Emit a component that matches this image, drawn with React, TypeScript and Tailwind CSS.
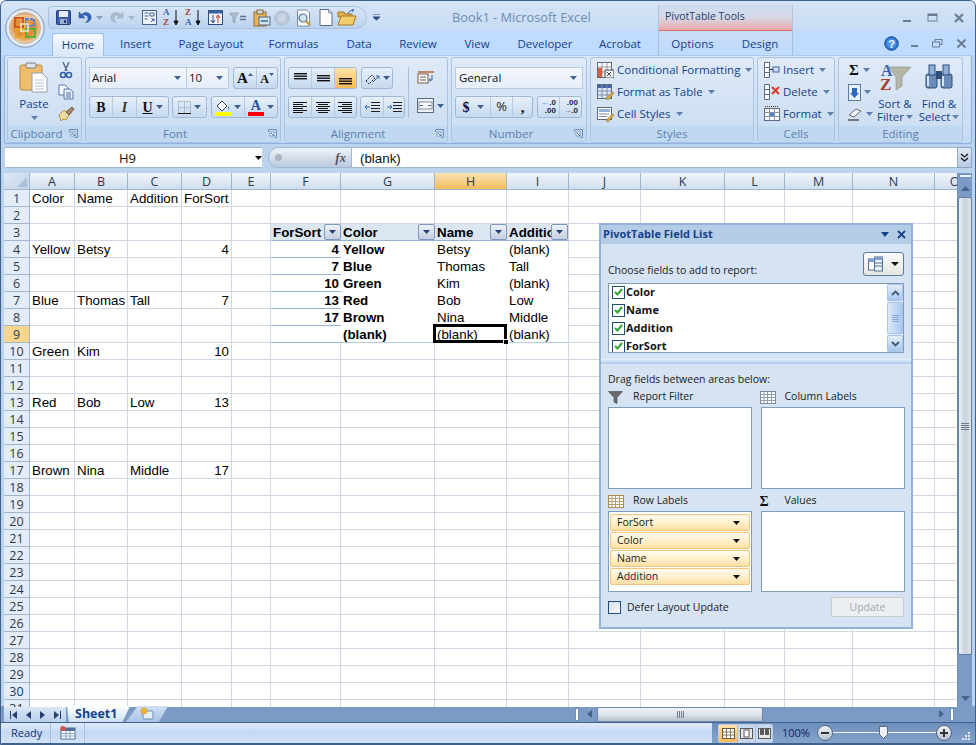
import React from "react";

const COLS = ["A", "B", "C", "D", "E", "F", "G", "H", "I", "J", "K", "L", "M", "N", "O"];
const ROWS = Array.from({ length: 31 }, (_, i) => i + 1);

type CellDef = { t: string; right?: boolean; bold?: boolean };

const CELLS: Record<string, CellDef> = {
  A1: { t: "Color" }, B1: { t: "Name" }, C1: { t: "Addition" }, D1: { t: "ForSort" },
  A4: { t: "Yellow" }, B4: { t: "Betsy" }, D4: { t: "4", right: true },
  A7: { t: "Blue" }, B7: { t: "Thomas" }, C7: { t: "Tall" }, D7: { t: "7", right: true },
  A10: { t: "Green" }, B10: { t: "Kim" }, D10: { t: "10", right: true },
  A13: { t: "Red" }, B13: { t: "Bob" }, C13: { t: "Low" }, D13: { t: "13", right: true },
  A17: { t: "Brown" }, B17: { t: "Nina" }, C17: { t: "Middle" }, D17: { t: "17", right: true },
  F3: { t: "ForSort", bold: true }, G3: { t: "Color", bold: true }, H3: { t: "Name", bold: true }, I3: { t: "Addition", bold: true },
  F4: { t: "4", right: true, bold: true }, G4: { t: "Yellow", bold: true }, H4: { t: "Betsy" }, I4: { t: "(blank)" },
  F5: { t: "7", right: true, bold: true }, G5: { t: "Blue", bold: true }, H5: { t: "Thomas" }, I5: { t: "Tall" },
  F6: { t: "10", right: true, bold: true }, G6: { t: "Green", bold: true }, H6: { t: "Kim" }, I6: { t: "(blank)" },
  F7: { t: "13", right: true, bold: true }, G7: { t: "Red", bold: true }, H7: { t: "Bob" }, I7: { t: "Low" },
  F8: { t: "17", right: true, bold: true }, G8: { t: "Brown", bold: true }, H8: { t: "Nina" }, I8: { t: "Middle" },
  G9: { t: "(blank)", bold: true }, H9: { t: "(blank)" }, I9: { t: "(blank)" },
};

function cellBorder(col: string, row: number) {
  const inPivot = row >= 3 && row <= 9 && ["F", "G", "H", "I"].includes(col);
  if (!inPivot) return "border-r border-b border-[#d0d7e5]";
  if (row === 3) {
    return col === "I"
      ? "bg-[#dce6f1] border-b border-b-[#95b3d7] border-r border-r-[#d0d7e5]"
      : "bg-[#dce6f1] border-b border-b-[#95b3d7]";
  }
  if (col === "F") return "border-b border-b-[#95b3d7]";
  if (row === 9) return col === "I" ? "border-b border-b-[#b8cce4] border-r border-r-[#d0d7e5]" : "border-b border-b-[#b8cce4]";
  return col === "I" ? "border-r border-r-[#d0d7e5]" : "";
}

function Caret({ className = "text-[#3f5f8f]" }: { className?: string }) {
  return (
    <svg width="7" height="4" viewBox="0 0 7 4" className={`shrink-0 ${className}`}>
      <polygon points="0,0 7,0 3.5,4" fill="currentColor" />
    </svg>
  );
}

function FilterBtn() {
  return (
    <div className="absolute right-0 top-0 w-[17px] h-[16px] rounded-[2px] border border-[#7f97bd] bg-gradient-to-b from-[#eef2f8] to-[#c3cede] flex items-center justify-center">
      <Caret className="text-[#27406f]" />
    </div>
  );
}

function Launcher({ className = "" }: { className?: string }) {
  return (
    <svg width="9" height="9" viewBox="0 0 9 9" className={className}>
      <path d="M.5 3V.5H8.5V8.5H6" fill="none" stroke="#6f8fb8" />
      <rect x="2" y="3" width="4" height="4" fill="#fff" stroke="#6f8fb8" strokeWidth=".8" />
      <path d="M3 4l3 3" stroke="#3f5f8f" />
    </svg>
  );
}

function OfficeButton() {
  return (
    <svg width="40" height="40" viewBox="0 0 40 40">
      <defs>
        <radialGradient id="orb" cx="50%" cy="45%" r="55%">
          <stop offset="0%" stopColor="#f2b05a" />
          <stop offset="60%" stopColor="#dd8a35" />
          <stop offset="100%" stopColor="#f0d9b8" />
        </radialGradient>
      </defs>
      <circle cx="20" cy="20" r="19.2" fill="#e4ebf2" stroke="#7d93aa" />
      <circle cx="20" cy="20" r="15.5" fill="url(#orb)" stroke="#c2b39c" />
      <path d="M9 10a15 11 0 0 1 22 0c-5 3-17 3-22 0z" fill="#fff" opacity=".45" />
      <rect x="10" y="10" width="8" height="9" fill="none" stroke="#d8571a" strokeWidth="2" />
      <rect x="21" y="11" width="8" height="7" fill="none" stroke="#4c86d6" strokeWidth="2" strokeDasharray="3 1" />
      <rect x="11" y="21" width="8" height="8" fill="none" stroke="#e6a52a" strokeWidth="2" />
      <rect x="21" y="21" width="9" height="8" fill="none" stroke="#5fae3c" strokeWidth="2" />
      <rect x="16" y="16" width="7" height="7" fill="none" stroke="#f6ead2" strokeWidth="1.4" />
    </svg>
  );
}

function QatSlot({ w = "w-[22px]", children }: { w?: string; children?: React.ReactNode }) {
  return <div className={`${w} h-[22px] shrink-0 flex items-center justify-center`}>{children}</div>;
}

function Qat() {
  return (
    <div className="w-[319px] h-[23px] ml-[48px] mt-[6px] rounded-r-[12px] rounded-l-[4px] border border-[#a9c2df] bg-gradient-to-b from-[#d7e5f6] to-[#bcd3ee] flex items-center pl-[3px] shrink-0">
      <QatSlot>
        <svg width="15" height="15" viewBox="0 0 15 15">
          <rect x=".5" y=".5" width="14" height="14" rx="1" fill="#3c5ea8" stroke="#283c78" />
          <rect x="3" y="1" width="9" height="6" fill="#e8eef8" />
          <rect x="4" y="9" width="7" height="5" fill="#9fb0d0" />
          <rect x="8" y="10" width="2" height="3" fill="#283c78" />
        </svg>
      </QatSlot>
      <QatSlot>
        <svg width="14" height="14" viewBox="0 0 14 14"><path d="M1 1v6h6L4.600 4.600C6 3.300 9.500 3.600 10 6.800c.3 2-.7 3.600-2.400 4.700C12 11 13.500 8 13 5.300 12.300 1.600 7.400.2 3.500 3.400z" fill="#2f66b5" stroke="#244c8c" strokeWidth=".5" /></svg>
      </QatSlot>
      <QatSlot w="w-[6px]"><Caret className="text-[#8aa0bd]" /></QatSlot>
      <div className="w-[4px]" />
      <QatSlot>
        <svg width="14" height="14" viewBox="0 0 14 14" className="-scale-x-100"><path d="M1 1v6h6L4.600 4.600C6 3.300 9.500 3.600 10 6.800c.3 2-.7 3.600-2.400 4.700C12 11 13.500 8 13 5.300 12.300 1.600 7.400.2 3.500 3.400z" fill="#aebccb" stroke="#94a5b8" strokeWidth=".5" /></svg>
      </QatSlot>
      <QatSlot w="w-[6px]"><Caret className="text-[#a3b4c9]" /></QatSlot>
      <div className="w-[4px]" />
      <QatSlot>
        <svg width="15" height="15" viewBox="0 0 15 15">
          <rect x=".5" y=".5" width="14" height="14" fill="#eef3fa" stroke="#46618c" />
          <path d="M2.500 3h4M2.500 6h4M2.500 9h3M8 3h4v3H8z" fill="none" stroke="#46618c" />
          <path d="M9 12l3-3m0 0v2.500m0-2.500H9.500" fill="none" stroke="#2f4f80" />
        </svg>
      </QatSlot>
      <QatSlot>
        <div className="relative w-[16px] h-[18px]">
          <span className="absolute left-0 top-[-2px] font-['Liberation_Serif',serif] font-bold text-[9px] leading-[10px] text-[#3f62a8]">A</span>
          <span className="absolute left-0 top-[8px] font-['Liberation_Serif',serif] font-bold text-[9px] leading-[10px] text-[#a04a3a]">Z</span>
          <svg width="6" height="18" viewBox="0 0 6 18" className="absolute right-0 top-0"><path d="M3 1v14M1 12l2 4 2-4z" stroke="#111" fill="#111" strokeWidth="1" /></svg>
        </div>
      </QatSlot>
      <QatSlot>
        <div className="relative w-[16px] h-[18px]">
          <span className="absolute left-0 top-[-2px] font-['Liberation_Serif',serif] font-bold text-[9px] leading-[10px] text-[#a04a3a]">Z</span>
          <span className="absolute left-0 top-[8px] font-['Liberation_Serif',serif] font-bold text-[9px] leading-[10px] text-[#3f62a8]">A</span>
          <svg width="6" height="18" viewBox="0 0 6 18" className="absolute right-0 top-0"><path d="M3 1v14M1 12l2 4 2-4z" stroke="#111" fill="#111" strokeWidth="1" /></svg>
        </div>
      </QatSlot>
      <QatSlot>
        <svg width="15" height="15" viewBox="0 0 15 15">
          <rect x=".5" y=".5" width="14" height="14" fill="#eef3fa" stroke="#2d4a80" />
          <rect x=".5" y=".5" width="14" height="3" fill="#3b5fa0" />
          <path d="M5 5v8M5 13l-2-3M5 13l2-3" stroke="#2d4a80" fill="none" />
          <path d="M10 13V5M10 5l-2 3M10 5l2 3" stroke="#c83a2a" fill="none" />
        </svg>
      </QatSlot>
      <div className="w-[1px]" />
      <QatSlot>
        <svg width="18" height="12" viewBox="0 0 18 12">
          <path d="M.5 1h9L6 6v5L4 10V6z" fill="#aebccb" stroke="#8b9cb0" strokeWidth=".7" />
          <path d="M11 4.500h6M11 7.500h6" stroke="#5f7898" strokeWidth="1.400" />
        </svg>
      </QatSlot>
      <div className="w-[2px]" />
      <QatSlot w="w-[21px]">
        <svg width="18" height="18" viewBox="0 0 18 18">
          <rect x="1" y="3" width="12" height="14" fill="#e7b45c" stroke="#9a6a22" />
          <rect x="4" y="1" width="6" height="4" fill="#d8d8d8" stroke="#7b6a44" />
          <rect x="6" y="8" width="11" height="8" fill="#d3e4f3" stroke="#4a6a7f" />
          <rect x="8" y="11" width="7" height="2" fill="#5c8a9f" />
        </svg>
      </QatSlot>
      <QatSlot w="w-[19px]">
        <svg width="16" height="16" viewBox="0 0 16 16"><circle cx="8" cy="8" r="7" fill="#bfccdc" stroke="#a9b8ca" /><circle cx="8" cy="8" r="5" fill="#ccd6e3" stroke="#b6c4d4" /></svg>
      </QatSlot>
      <div className="w-[2px]" />
      <QatSlot>
        <svg width="18" height="18" viewBox="0 0 18 18">
          <path d="M2.500 1h9l3 3v13h-12z" fill="#fff" stroke="#7a8aa0" />
          <circle cx="8" cy="9" r="4" fill="#cfe3f5" stroke="#5b6f88" strokeWidth="1.200" />
          <path d="M11 12l4 4" stroke="#c8962a" strokeWidth="2.400" />
        </svg>
      </QatSlot>
      <QatSlot w="w-[21px]">
        <svg width="14" height="17" viewBox="0 0 14 17"><path d="M1 .5h8.500L13 4v12.500H1z" fill="#fff" stroke="#5c6c88" /><path d="M9.500.5V4H13z" fill="#d8e2ee" stroke="#5c6c88" strokeWidth=".6" /></svg>
      </QatSlot>
      <QatSlot>
        <svg width="20" height="17" viewBox="0 0 20 17">
          <path d="M1 3h6l1 2h7v3H1z" fill="#e0b04a" stroke="#a57a25" />
          <path d="M1 16l3-9h15l-3 9z" fill="#f2cc6c" stroke="#a57a25" />
          <path d="M11 5c1-3 3-4 6-4m0 0l-2-1m2 1l-2 2" fill="none" stroke="#3f62a8" />
        </svg>
      </QatSlot>
    </div>
  );
}

function TitleBar() {
  const c = "#6b7d93";
  return (
    <div className="h-[31px] flex shrink-0 bg-gradient-to-b from-[#d5e4f6] via-[#cfe0f5] to-[#c6dbf6] relative">
      <Qat />
      <svg width="7" height="7" viewBox="0 0 7 7" className="ml-[6px] mt-[14px]"><path d="M0 0h7M0 3l3.500 3 3.500-3z" stroke="#2f4f80" fill="#2f4f80" /></svg>
      <div className="absolute left-[452px] top-[7px] text-[12.800px] leading-[20px] text-[#6a8cb4] whitespace-nowrap">Book1 - Microsoft Excel</div>
      <div className="absolute left-[658px] top-[5px] w-[135px] h-[26px] bg-gradient-to-b from-[#cbdcf2] via-[#d6d8e6] to-[#e8a8a8] border-x border-[#b3c3d8] pl-[6px] pt-[3px] text-[10.500px] leading-[17px] text-[#1f3f70] border-b border-b-[#e07070]">PivotTable Tools</div>
      <div className="absolute right-[11px] top-[12px] flex items-center">
        <svg width="10" height="10" viewBox="0 0 10 10"><rect x="1" y="7" width="8" height="2" fill={c} /></svg>
        <svg width="12" height="10" viewBox="0 0 12 10" className="ml-[15px]"><rect x="1" y="1" width="9" height="7" fill="none" stroke={c} /><rect x="1" y="1" width="9" height="2" fill={c} /></svg>
        <svg width="12" height="12" viewBox="0 0 12 12" className="ml-[14px]"><path d="M2 2l8 8M10 2l-8 8" stroke={c} strokeWidth="2.200" /></svg>
      </div>
    </div>
  );
}

const TABS: [string, string][] = [
  ["Insert", "w-[63px]"], ["Page Layout", "w-[88px]"], ["Formulas", "w-[77px]"], ["Data", "w-[54px]"], ["Review", "w-[64px]"],
  ["View", "w-[54px]"], ["Developer", "w-[82px]"], ["Acrobat", "w-[68px]"], ["Options", "w-[77px]"], ["Design", "w-[58px]"],
];

function TabRow() {
  return (
    <div className="h-[24px] flex items-stretch shrink-0 bg-[#bfdbff] relative pl-[52px]">
      <div className="absolute left-[658px] top-0 w-[135px] h-[24px] border-x border-[#a9c0dc] bg-gradient-to-b from-[#c9dcf5] to-[#bfdbff]" />
      <div className="w-[52px] mt-[2px] h-[23px] rounded-t-[3px] border border-b-0 border-[#9ebfe6] bg-gradient-to-b from-[#f6fafe] to-[#d9e7f7] text-center leading-[22px] text-[11.500px] text-[#15428b] relative">Home</div>
      {TABS.map(([t, w]) => (
        <div key={t} className={`${w} text-center leading-[24px] pt-[1px] text-[11.500px] text-[#15428b] relative whitespace-nowrap`}>{t}</div>
      ))}
      <div className="absolute right-[9px] top-[5px] flex items-center">
        <svg width="15" height="15" viewBox="0 0 15 15" className="mr-[11px]"><circle cx="7.500" cy="7.500" r="6.800" fill="#2a6fc9" stroke="#1f4f90" /><circle cx="7.500" cy="7.500" r="5" fill="#4b92e4" /><text x="7.500" y="11.500" textAnchor="middle" fontSize="11" fontWeight="700" fontFamily="Liberation Sans" fill="#fff">?</text></svg>
        <svg width="9" height="9" viewBox="0 0 9 9"><rect x="1" y="6" width="7" height="2" fill="#6b7d93" /></svg>
        <svg width="11" height="9" viewBox="0 0 11 9" className="ml-[13px]"><rect x="3" y=".5" width="7" height="5" fill="none" stroke="#6b7d93" /><rect x=".5" y="3" width="7" height="5" fill="#bfdbff" stroke="#6b7d93" /></svg>
        <svg width="11" height="11" viewBox="0 0 11 11" className="ml-[13px]"><path d="M1.500 1.500l8 8M9.500 1.500l-8 8" stroke="#6b7d93" strokeWidth="2" /></svg>
      </div>
    </div>
  );
}

function Group({ label, w, launcher, children }: { label: string; w: string; launcher?: boolean; children: React.ReactNode }) {
  return (
    <div className={`${w} h-[86px] shrink-0 rounded-[3px] border border-[#a9c3e0] bg-gradient-to-b from-[#dfeaf8] to-[#c9dcf1] flex flex-col overflow-hidden`}>
      <div className="h-[68px] relative">{children}</div>
      <div className={`h-[16px] bg-[#c1d8f1] text-center text-[11.500px] leading-[16px] text-[#5d80ae] relative whitespace-nowrap ${launcher ? "pr-[16px]" : ""}`}>
        {label}
        {launcher && <Launcher className="absolute right-[3px] top-[3px]" />}
      </div>
    </div>
  );
}

function Seg({ w, active, last, children }: { w: string; active?: boolean; last?: boolean; children?: React.ReactNode }) {
  return (
    <div className={`${w} h-full flex items-center justify-center gap-[3px] ${last ? "" : "border-r border-[#b4c9e2]"} ${active ? "bg-gradient-to-b from-[#fde3a7] to-[#fbb954]" : ""}`}>
      {children}
    </div>
  );
}

function SegBox({ w, children }: { w: string; children: React.ReactNode }) {
  return (
    <div className={`${w} h-[22px] shrink-0 rounded-[3px] border border-[#9fb8d8] bg-gradient-to-b from-[#e8f0fa] to-[#c5d9ef] flex overflow-hidden`}>
      {children}
    </div>
  );
}

function Combo({ w, text, className = "" }: { w: string; text: string; className?: string }) {
  return (
    <div className={`${w} h-[22px] shrink-0 border border-[#b5cbe5] bg-gradient-to-b from-[#f4f8fd] to-[#e6eef9] flex items-center justify-between pl-[2px] pr-[5px] text-[11.500px] text-[#111] ${className}`}>
      <span>{text}</span>
      <Caret />
    </div>
  );
}

function Lines({ rows, h = 1 }: { rows: [number, number, number][]; h?: number }) {
  return (
    <svg width="15" height="13" viewBox="0 0 15 13">
      {rows.map(([x, y, w], i) => (
        <rect key={i} x={x} y={y} width={w} height={h} fill="#111" />
      ))}
    </svg>
  );
}

const ALIGN_L: [number, number, number][] = [[0, 1, 14], [0, 3, 10], [0, 5, 14], [0, 7, 10], [0, 9, 14], [0, 11, 10]];
const ALIGN_C: [number, number, number][] = [[0, 1, 14], [2, 3, 10], [0, 5, 14], [2, 7, 10], [0, 9, 14], [2, 11, 10]];
const ALIGN_R: [number, number, number][] = [[0, 1, 14], [4, 3, 10], [0, 5, 14], [4, 7, 10], [0, 9, 14], [4, 11, 10]];

function Clipboard() {
  return (
    <Group label="Clipboard" w="w-[75px]" launcher>
      <div className="absolute left-0 top-0 w-[48px] flex flex-col items-center pt-[4px] pl-[4px]">
        <svg width="30" height="32" viewBox="0 0 30 32">
          <rect x="1" y="3" width="22" height="25" rx="2" fill="#eebd6e" stroke="#b98a3f" />
          <rect x="7" y="1" width="10" height="5" rx="1" fill="#dfe3e8" stroke="#7f7f7f" />
          <path d="M13 11h10l5 5v14H13z" fill="#fff" stroke="#8e9bb0" />
          <path d="M16 18h9M16 21h9M16 24h9M16 27h9" stroke="#b4bfd0" />
        </svg>
        <div className="text-[11.500px] leading-[14px] text-[#15428b] mt-[3px]">Paste</div>
        <Caret className="text-[#5c7fae] mt-[5px]" />
      </div>
      <div className="absolute left-[48px] top-[4px] w-[20px] flex flex-col items-center">
        <svg width="14" height="17" viewBox="0 0 14 17"><path d="M4 0l4 9M10 0L6 9" stroke="#5a6c8c" strokeWidth="1.500" /><circle cx="4" cy="13" r="2.500" fill="none" stroke="#2f5fa8" strokeWidth="1.600" /><circle cx="10" cy="13" r="2.500" fill="none" stroke="#2f5fa8" strokeWidth="1.600" /></svg>
        <svg width="16" height="16" viewBox="0 0 16 16" className="mt-[5px]"><path d="M1 1h6l3 3v7H1z" fill="#fff" stroke="#5677a8" /><path d="M6 5h6l3 3v7H6z" fill="#e6effa" stroke="#5677a8" /><path d="M8 9h5M8 11h5M8 13h5" stroke="#5677a8" /></svg>
        <svg width="17" height="16" viewBox="0 0 17 16" className="mt-[6px]"><path d="M1 9l5-5 5 5-3 5-3-1-2 2z" fill="#eedb9f" stroke="#b8923f" /><path d="M8 6l6-5 2 2-5 6z" fill="#a9876a" stroke="#6e5a44" /></svg>
      </div>
    </Group>
  );
}

function FontGroup() {
  return (
    <Group label="Font" w="w-[196px]" launcher>
      <div className="flex pl-[3px] pt-[9px]">
        <Combo w="w-[98px]" text="Arial" />
        <Combo w="w-[42px]" text="10" className="border-l-0" />
        <div className="w-[4px]" />
        <SegBox w="w-[45px]">
          <Seg w="w-[23px]"><span className="font-['Liberation_Serif',serif] font-bold text-[15px] text-[#111] leading-[14px]">A</span><svg width="5" height="3" viewBox="0 0 5 3" className="mb-[8px] ml-[-3px]"><polygon points="0,3 5,3 2.500,0" fill="#3f5f8f" /></svg></Seg>
          <Seg w="w-[20px]" last><span className="font-['Liberation_Serif',serif] font-bold text-[12px] text-[#111] leading-[14px] mt-[2px]">A</span><svg width="5" height="3" viewBox="0 0 5 3" className="mb-[8px] ml-[-3px]"><polygon points="0,0 5,0 2.500,3" fill="#3f5f8f" /></svg></Seg>
        </SegBox>
      </div>
      <div className="flex pl-[3px] pt-[7px]">
        <SegBox w="w-[80px]">
          <Seg w="w-[23px]"><span className="font-['Liberation_Serif',serif] font-bold text-[14px] text-[#111]">B</span></Seg>
          <Seg w="w-[24px]"><span className="font-['Liberation_Serif',serif] italic font-bold text-[14px] text-[#333]">I</span></Seg>
          <Seg w="w-[31px]" last><span className="font-['Liberation_Serif',serif] font-bold text-[14px] text-[#111] underline">U</span><Caret /></Seg>
        </SegBox>
        <div className="w-[3px]" />
        <SegBox w="w-[35px]">
          <Seg w="w-full" last>
            <svg width="13" height="13" viewBox="0 0 13 13"><path d="M.5.5h12M.5 6.500h12M.5.5v12M6.500.5v12M12.500.5v12" stroke="#8a96a8" strokeDasharray="1 1" /><path d="M0 12.500h13" stroke="#111" /></svg>
            <Caret />
          </Seg>
        </SegBox>
        <div className="w-[4px]" />
        <SegBox w="w-[67px]">
          <Seg w="w-[33px]">
            <svg width="16" height="17" viewBox="0 0 16 17"><path d="M2 7l5-5 5 5-5 5z" fill="#fff" stroke="#444" /><path d="M13 7c1 1 2 3 1 4-1 0-1-3-1-4z" fill="#3f7fc0" /><rect y="13" width="16" height="4" fill="#ffff00" /></svg>
            <Caret />
          </Seg>
          <Seg w="w-[33px]" last>
            <div className="flex flex-col items-center">
              <span className="font-['Liberation_Serif',serif] font-bold text-[14px] leading-[13px] text-[#27509a]">A</span>
              <div className="w-[16px] h-[4px] bg-[#ff0000]" />
            </div>
            <Caret />
          </Seg>
        </SegBox>
      </div>
    </Group>
  );
}

function Alignment() {
  return (
    <Group label="Alignment" w="w-[164px]" launcher>
      <div className="flex pl-[3px] pt-[9px]">
        <div className="w-[117px] shrink-0">
          <div className="flex">
            <SegBox w="w-[69px]">
              <Seg w="w-[23px]"><Lines h={1.4} rows={[[1, 1, 13], [1, 3.500, 13], [1, 6, 13]]} /></Seg>
              <Seg w="w-[23px]"><Lines h={1.4} rows={[[1, 3, 13], [1, 5.500, 13], [1, 8, 13]]} /></Seg>
              <Seg w="w-[21px]" active last><Lines h={1.4} rows={[[1, 6, 13], [1, 8.500, 13], [1, 11, 13]]} /></Seg>
            </SegBox>
            <div className="w-[4px]" />
            <SegBox w="w-[32px]">
              <Seg w="w-full" last>
                <svg width="15" height="13" viewBox="0 0 15 13"><path d="M1 9l6-6 3 3-6 6z" fill="none" stroke="#222" strokeDasharray="2 1" /><path d="M8 10l6-6m0 0v3m0-3h-3" stroke="#3f5f8f" fill="none" /></svg>
                <Caret />
              </Seg>
            </SegBox>
          </div>
          <div className="flex mt-[7px]">
            <SegBox w="w-[69px]">
              <Seg w="w-[23px]"><Lines rows={ALIGN_L} /></Seg>
              <Seg w="w-[23px]"><Lines rows={ALIGN_C} /></Seg>
              <Seg w="w-[21px]" last><Lines rows={ALIGN_R} /></Seg>
            </SegBox>
            <div className="w-[3px]" />
            <SegBox w="w-[45px]">
              <Seg w="w-[23px]">
                <svg width="15" height="13" viewBox="0 0 15 13"><path d="M6 1.500h9M6 4.500h9M6 7.500h9M6 10.500h9" stroke="#222" /><path d="M5 6H0m0 0l2-2m-2 2l2 2" stroke="#2f66c0" fill="none" /></svg>
              </Seg>
              <Seg w="w-[20px]" last>
                <svg width="15" height="13" viewBox="0 0 15 13"><path d="M6 1.500h9M6 4.500h9M6 7.500h9M6 10.500h9" stroke="#222" /><path d="M0 6h5m0 0L3 4m2 2L3 8" stroke="#2f66c0" fill="none" /></svg>
              </Seg>
            </SegBox>
          </div>
        </div>
        <div className="w-px h-[51px] bg-[#a9c0dc] ml-[3px] mr-[8px] shrink-0" />
        <div className="flex flex-col pt-[3px] gap-[12px]">
          <svg width="18" height="16" viewBox="0 0 18 16"><rect x="1" y="4" width="10" height="9" fill="#fff" stroke="#7a5a3a" /><path d="M1 2h16" stroke="#b06a3a" strokeWidth="1.500" /><path d="M3 7h6M3 10h6" stroke="#5a5a5a" /><path d="M15 5v5h-3m0 0l1.500-1.500M12 10l1.500 1.500" fill="none" stroke="#3f5f8f" /></svg>
          <div className="flex items-center gap-[3px]">
            <svg width="17" height="15" viewBox="0 0 17 15"><rect x=".5" y=".5" width="16" height="14" fill="#eef3fa" stroke="#5a6a80" /><rect x="2" y="4" width="13" height="7" fill="#fff" stroke="#7a8aa0" /><path d="M3 7.500h3M14 7.500h-3" stroke="#3f5f8f" /></svg>
            <Caret />
          </div>
        </div>
      </div>
    </Group>
  );
}

function NumberGroup() {
  return (
    <Group label="Number" w="w-[136px]" launcher>
      <div className="pl-[3px] pt-[9px]"><Combo w="w-[128px]" text="General" className="pl-[3px]" /></div>
      <div className="flex pl-[3px] pt-[7px]">
        <SegBox w="w-[78px]">
          <Seg w="w-[35px]"><span className="font-['Liberation_Serif',serif] font-bold text-[14px] text-[#111] mr-[4px]">$</span><Caret /></Seg>
          <Seg w="w-[22px]"><span className="text-[13px] text-[#222]">%</span></Seg>
          <Seg w="w-[19px]" last><span className="font-['Liberation_Serif',serif] font-bold text-[15px] text-[#111] leading-[10px]">,</span></Seg>
        </SegBox>
        <div className="w-[4px]" />
        <SegBox w="w-[45px]">
          <Seg w="w-[22px]"><div className="font-['Liberation_Sans',sans-serif] font-bold text-[8px] leading-[8px] text-[#222] text-right"><span className="text-[#2f66c0]">←</span>.0<br />.00</div></Seg>
          <Seg w="w-[21px]" last><div className="font-['Liberation_Sans',sans-serif] font-bold text-[8px] leading-[8px] text-[#222] text-right"><span>.00</span><br /><span className="text-[#2f66c0]">→</span>.0</div></Seg>
        </SegBox>
      </div>
    </Group>
  );
}

function IconRow({ icon, text }: { icon: React.ReactNode; text: string }) {
  return (
    <div className="h-[22px] flex items-center pl-[6px] gap-[3px] text-[11.500px] text-[#15428b] whitespace-nowrap">
      {icon}
      <span>{text}</span>
      <Caret className="text-[#5c7fae] ml-[2px]" />
    </div>
  );
}

function Styles() {
  return (
    <Group label="Styles" w="w-[164px]">
      <div className="pt-[1px]">
        <IconRow
          text="Conditional Formatting"
          icon={<svg width="17" height="16" viewBox="0 0 17 16"><rect x=".5" y=".5" width="14" height="15" fill="#fff" stroke="#667" /><path d="M.5 5h14M.5 10h14M5 .5v15M10 .5v15" stroke="#8a96a8" /><rect x="1" y="6" width="4" height="9" fill="#e05a3a" /><rect x="8" y="8" width="9" height="8" fill="#eef3fa" stroke="#444" /><path d="M10 10l4 4M14 10l-4 4" stroke="#222" strokeWidth=".8" /></svg>}
        />
        <IconRow
          text="Format as Table"
          icon={<svg width="17" height="16" viewBox="0 0 17 16"><rect x=".5" y=".5" width="14" height="14" fill="#dbe7f6" stroke="#5a6a80" /><rect x="1" y="1" width="13" height="3" fill="#3f62a8" /><path d="M.5 7h14M.5 11h14M5 .5v14M10 .5v14" stroke="#7f8ea4" /><path d="M9 15l6-7 2 1-6 7z" fill="#e0b040" stroke="#8a6a20" strokeWidth=".6" /></svg>}
        />
        <IconRow
          text="Cell Styles"
          icon={<svg width="17" height="16" viewBox="0 0 17 16"><rect x=".5" y="1.500" width="14" height="12" fill="#fff" stroke="#5a6a80" /><rect x="2" y="3" width="11" height="3" fill="#8fb4e2" /><path d="M2 8h10M2 10.500h8" stroke="#7f8ea4" /><path d="M9 15l6-7 2 1-6 7z" fill="#e0b040" stroke="#8a6a20" strokeWidth=".6" /></svg>}
        />
      </div>
    </Group>
  );
}

function Cells() {
  return (
    <Group label="Cells" w="w-[78px]">
      <div className="pt-[1px]">
        <IconRow
          text="Insert"
          icon={<svg width="16" height="16" viewBox="0 0 16 16"><path d="M.5.5h5v5h-5zM.5 10.500h5v5h-5zM.5 5.500h5v5h-5z" fill="#fff" stroke="#5a6a80" /><rect x="9" y="5" width="6" height="5" fill="#cfe0f5" stroke="#3f62a8" /><path d="M6 7.500h3" stroke="#222" /></svg>}
        />
        <IconRow
          text="Delete"
          icon={<svg width="16" height="16" viewBox="0 0 16 16"><path d="M.5.5h5v5h-5zM.5 10.500h5v5h-5zM.5 5.500h5v5h-5z" fill="#fff" stroke="#5a6a80" /><path d="M8 3l7 7M15 3l-7 7" stroke="#d83a2a" strokeWidth="2" /></svg>}
        />
        <IconRow
          text="Format"
          icon={<svg width="16" height="16" viewBox="0 0 16 16"><rect x=".5" y="2.500" width="15" height="12" fill="#fff" stroke="#5a6a80" /><path d="M.5 6.500h15M.5 10.500h15M5.500 2.500v12M10.500 2.500v12" stroke="#8a96a8" /><rect x="6" y="7" width="4" height="3" fill="#4f7fd0" /><path d="M1 .5h14" stroke="#333" strokeDasharray="1 1" /></svg>}
        />
      </div>
    </Group>
  );
}

function Editing() {
  return (
    <Group label="Editing" w="w-[125px]">
      <div className="absolute left-[9px] top-[1px] w-[28px]">
        <div className="h-[22px] flex items-center gap-[4px]"><span className="font-['Liberation_Serif',serif] font-bold text-[15px] leading-[15px] text-[#111] ml-[1px]">Σ</span><Caret className="text-[#5c7fae]" /></div>
        <div className="h-[22px] flex items-center gap-[3px]"><svg width="13" height="17" viewBox="0 0 13 17"><rect x=".5" y=".5" width="12" height="16" fill="#e8f0fa" stroke="#5a7aa8" /><path d="M4 4h5v5h2l-4.500 5L2 9h2z" fill="#2f66c0" /></svg><Caret className="text-[#5c7fae]" /></div>
        <div className="h-[22px] flex items-center gap-[3px]"><svg width="15" height="14" viewBox="0 0 15 14"><path d="M1 8l7-6 5 2-7 6z" fill="#f2f4f8" stroke="#6a6a7a" /><path d="M0 13h11" stroke="#111" /></svg><Caret className="text-[#5c7fae]" /></div>
      </div>
      <div className="absolute left-[36px] top-[4px] w-[40px] flex flex-col items-center text-[11.500px] leading-[13px] text-[#15428b]">
        <svg width="32" height="29" viewBox="0 0 32 29">
          <path d="M10 5h22L23 15v9l-6 4V15z" fill="#b5b5a8" stroke="#8a8a80" strokeWidth=".6" />
          <text x="2" y="14" fontFamily="Liberation Serif" fontWeight="700" fontSize="16" fill="#3f62a8">A</text>
          <text x="1" y="28" fontFamily="Liberation Serif" fontWeight="700" fontSize="17" fill="#a04030">Z</text>
        </svg>
        <div className="mt-[6px] whitespace-nowrap">Sort &amp;</div>
        <div className="flex items-center gap-[2px] whitespace-nowrap">Filter<Caret className="text-[#5c7fae]" /></div>
      </div>
      <div className="absolute left-[78px] top-[4px] w-[44px] flex flex-col items-center text-[11.500px] leading-[13px] text-[#15428b]">
        <svg width="28" height="29" viewBox="0 0 28 29">
          <rect x="1" y="12" width="11" height="14" rx="2" fill="#6a8cb8" stroke="#2f4f78" />
          <rect x="16" y="12" width="11" height="14" rx="2" fill="#6a8cb8" stroke="#2f4f78" />
          <rect x="4" y="3" width="6" height="10" fill="#8fb0d8" stroke="#2f4f78" />
          <rect x="18" y="3" width="6" height="10" fill="#8fb0d8" stroke="#2f4f78" />
          <rect x="11" y="9" width="6" height="8" fill="#2f4f78" />
          <path d="M3 14v10M18 14v10" stroke="#d4e4f8" strokeWidth="2" />
        </svg>
        <div className="mt-[6px] whitespace-nowrap">Find &amp;</div>
        <div className="flex items-center gap-[2px] whitespace-nowrap">Select<Caret className="text-[#5c7fae]" /></div>
      </div>
    </Group>
  );
}

function Ribbon() {
  return (
    <div className="h-[92px] shrink-0 bg-[#bcd3ee] px-[4px] pb-[3px]">
      <div className="h-[89px] rounded-[3px] border border-[#8db2e3] border-t-[#a9c8ec] bg-gradient-to-b from-[#dbe8f8] to-[#c5daf2] flex gap-[3px] pl-[2px] pt-[1px]">
        <Clipboard />
        <FontGroup />
        <Alignment />
        <NumberGroup />
        <Styles />
        <Cells />
        <Editing />
      </div>
    </div>
  );
}

function FormulaBar() {
  return (
    <div className="h-[26px] shrink-0 bg-[#bcd3ee] flex pl-[5px] pr-[4px] pb-[5px]">
      <div className="w-[257px] bg-white border-y border-[#9db8d6] flex items-center relative text-[13px] text-[#111]">
        <span className="absolute left-[114px] top-[1px]">H9</span>
        <Caret className="absolute right-[0px] text-[#111]" />
      </div>
      <div className="w-[6px]" />
      <div className="w-[84px] rounded-l-full border border-[#9db8d6] bg-gradient-to-b from-[#f0f4f9] via-[#d5dfeb] to-[#bccadd] flex items-center justify-between pl-[6px] pr-[5px]">
        <div className="w-[7px] h-[7px] rounded-full bg-[#aab6c5]" />
        <span className="font-['Liberation_Serif',serif] italic font-bold text-[13px] text-[#555]">fx</span>
      </div>
      <div className="flex-1 bg-white border-y border-[#9db8d6] pl-[8px] pt-[1px] text-[13.330px] leading-[19px] font-['Liberation_Sans',sans-serif] text-[#111]">(blank)</div>
      <div className="w-[15px] border border-[#8aa6c8] bg-gradient-to-b from-[#e0e9f5] to-[#b8cbe3] flex items-center justify-center">
        <svg width="9" height="9" viewBox="0 0 9 9"><path d="M1 1l3.500 3L8 1M1 5l3.500 3L8 5" fill="none" stroke="#111" strokeWidth="1.300" /></svg>
      </div>
    </div>
  );
}

function Sheet() {
  return (
    <div className="w-[953px] h-[534px] overflow-hidden relative bg-white">
      <div className="grid grid-cols-[26px_45px_53px_54px_50px_39px_70px_94px_72px_62px_72px_84px_60px_68px_82px_40px] auto-rows-[17px] font-['Liberation_Sans',sans-serif] text-[13.330px] leading-[16px] text-[#000]">
        <div className="border-r border-b border-[#9eb6ce] bg-gradient-to-br from-[#dfe8f4] to-[#c3d3e8] flex items-end justify-end pr-[2px] pb-[2px]">
          <svg width="10" height="10" viewBox="0 0 10 10"><polygon points="10,0 10,10 0,10" fill="#a9bfd9" /></svg>
        </div>
        {COLS.map((c) => (
          <div key={c} className={`border-r border-b border-[#9eb6ce] bg-gradient-to-b text-center pt-[1px] overflow-hidden font-['Open_Sans',sans-serif] text-[12.500px] leading-[15px] text-[#2a3a50] ${c === "H" ? "from-[#fbe3b0] to-[#f3bd5c]" : "from-[#eff4fa] to-[#d2deee]"}`}>
            {c}
          </div>
        ))}
        {ROWS.map((r) => (
          <React.Fragment key={r}>
            <div className={`border-r border-b border-[#9eb6ce] text-center pt-[1px] overflow-hidden font-['Open_Sans',sans-serif] text-[12.500px] leading-[15px] text-[#2a3a50] ${r === 9 ? "bg-[#fbd48d]" : "bg-[#e4ecf7]"}`}>
              {r}
            </div>
            {COLS.map((c) => {
              const k = `${c}${r}`;
              const cell = CELLS[k];
              return (
                <div key={k} className={`relative overflow-hidden whitespace-nowrap px-[2px] pt-[1px] ${cellBorder(c, r)} ${cell?.right ? "text-right" : ""} ${cell?.bold ? "font-bold" : ""}`}>
                  {cell?.t}
                  {r === 3 && ["F", "G", "H", "I"].includes(c) && <FilterBtn />}
                </div>
              );
            })}
          </React.Fragment>
        ))}
      </div>
      <div className="absolute left-[429px] top-[151px] w-[74px] h-[19px] border-[3px] border-black">
        <div className="absolute right-[-5px] bottom-[-5px] w-[6px] h-[6px] bg-black border border-white" />
      </div>
      <PivotPanel />
    </div>
  );
}

function FieldRow({ name }: { name: string }) {
  return (
    <div className="h-[18px] flex items-center pl-[3px] gap-[1px] font-bold text-[11px] text-[#111] shrink-0">
      <div className="w-[13px] h-[13px] border border-[#1f4f6f] bg-white flex items-center justify-center shrink-0">
        <svg width="9" height="8" viewBox="0 0 9 8"><path d="M1 4l2.500 2.500L8 1" fill="none" stroke="#2fa52f" strokeWidth="2" /></svg>
      </div>
      {name}
    </div>
  );
}

function AreaHead({ icon, text }: { icon: React.ReactNode; text: string }) {
  return (
    <div className="w-[153px] flex items-center h-[18px]">
      <div className="w-[25px] flex items-center">{icon}</div>
      {text}
    </div>
  );
}

function PillField({ name }: { name: string }) {
  return (
    <div className="h-[17px] mb-[1px] rounded-[2px] border border-[#f2c47c] bg-gradient-to-b from-[#fffbef] via-[#fff0cc] to-[#fddfa4] flex items-center justify-between pl-[6px] pr-[9px] text-[10.500px] text-[#222]">
      {name}
      <Caret className="text-[#111]" />
    </div>
  );
}

const TableIcon = ({ tint }: { tint: string }) => (
  <svg width="16" height="13" viewBox="0 0 16 13">
    <rect x=".5" y=".5" width="15" height="12" fill="#fff" stroke={tint} />
    <path d="M.5 3.500h15M.5 6.500h15M.5 9.500h15M4 .5v12M7.500 .5v12M11.500 .5v12" stroke={tint} strokeWidth=".8" />
  </svg>
);

function PivotPanel() {
  return (
    <div className="absolute left-[595px] top-[50px] w-[314px] h-[406px] border-2 border-[#8fb2dc] bg-[#d5e3f2] text-[10.500px] text-[#222] font-['Open_Sans',sans-serif] flex flex-col">
      <div className="h-[19px] bg-[#b5cce6] flex items-center justify-between pl-[2px] pr-[5px] font-bold text-[11px] text-[#15428b] shrink-0">
        PivotTable Field List
        <div className="flex items-center gap-[8px]">
          <svg width="8" height="5" viewBox="0 0 8 5"><polygon points="0,0 8,0 4,5" fill="#15428b" /></svg>
          <svg width="9" height="9" viewBox="0 0 9 9"><path d="M1 1l7 7M8 1L1 8" stroke="#15428b" strokeWidth="1.800" /></svg>
        </div>
      </div>
      <div className="flex justify-end pr-[7px] pt-[8px] h-[31px] shrink-0">
        <div className="w-[41px] h-[24px] rounded-[3px] border border-[#5a7ba0] bg-gradient-to-b from-[#fbfcfe] to-[#e5e5e0] flex items-center justify-center gap-[8px]">
          <svg width="15" height="16" viewBox="0 0 15 16"><rect x=".5" y="3" width="7" height="11" fill="#fff" stroke="#4f6f98" /><rect x=".5" y="3" width="7" height="3" fill="#7f9fd0" /><rect x="6.500" y="1" width="8" height="14" fill="#eef3fa" stroke="#4f6f98" /><rect x="6.500" y="1" width="8" height="3" fill="#7f9fd0" /><path d="M6.500 7h8M6.500 10h8" stroke="#4f6f98" /></svg>
          <svg width="8" height="4" viewBox="0 0 8 4"><polygon points="0,0 8,0 4,4" fill="#111" /></svg>
        </div>
      </div>
      <div className="pl-[7px] h-[15px] leading-[15px] -mt-[12px] shrink-0 text-[#222]">Choose fields to add to report:</div>
      <div className="ml-[7px] mr-[7px] mt-[5px] h-[70px] border border-[#7f9db9] bg-white flex overflow-hidden shrink-0">
        <div className="flex-1 flex flex-col -mt-[1px] overflow-hidden">
          {["Color", "Name", "Addition", "ForSort"].map((f) => <FieldRow key={f} name={f} />)}
        </div>
        <div className="w-[16px] flex flex-col bg-[#e3ecf8]">
          <div className="h-[17px] rounded-[2px] border border-[#a9c4ea] bg-gradient-to-b from-[#e4edf9] to-[#a9c6f0] flex items-center justify-center"><svg width="9" height="6" viewBox="0 0 9 6"><path d="M1 5l3.500-3.500L8 5" fill="none" stroke="#3f5878" strokeWidth="1.800" /></svg></div>
          <div className="h-[32px] mt-[1px] rounded-[2px] border border-[#a9c4ea] bg-gradient-to-r from-[#dce8f9] to-[#aac8f2] flex flex-col items-center justify-center gap-[1px]">
            <div className="w-[7px] h-px bg-[#8aa8d2]" /><div className="w-[7px] h-px bg-[#8aa8d2]" /><div className="w-[7px] h-px bg-[#8aa8d2]" /><div className="w-[7px] h-px bg-[#8aa8d2]" />
          </div>
          <div className="h-[17px] mt-[1px] rounded-[2px] border border-[#a9c4ea] bg-gradient-to-b from-[#e4edf9] to-[#a9c6f0] flex items-center justify-center"><svg width="9" height="6" viewBox="0 0 9 6"><path d="M1 1l3.500 3.500L8 1" fill="none" stroke="#3f5878" strokeWidth="1.800" /></svg></div>
        </div>
      </div>
      <div className="h-[5px] mt-[6px] bg-gradient-to-b from-[#e9f1fa] to-[#a9c8ec] shrink-0" />
      <div className="pl-[7px] mt-[8px] h-[15px] leading-[15px] shrink-0">Drag fields between areas below:</div>
      <div className="flex pl-[7px] h-[18px] mt-[1px] shrink-0">
        <AreaHead text="Report Filter" icon={<svg width="15" height="13" viewBox="0 0 15 13"><path d="M.5.500h14L9 6.500v6l-3-1.500V6.500z" fill="#6a6a6a" stroke="#444" strokeWidth=".6" /></svg>} />
        <AreaHead text="Column Labels" icon={<TableIcon tint="#7a8aa0" />} />
      </div>
      <div className="flex pl-[7px] gap-[9px] mt-[1px] shrink-0">
        <div className="w-[144px] h-[82px] border border-[#7f9db9] bg-white" />
        <div className="w-[144px] h-[82px] border border-[#7f9db9] bg-white" />
      </div>
      <div className="flex pl-[7px] h-[18px] mt-[3px] shrink-0">
        <AreaHead text="Row Labels" icon={<TableIcon tint="#b08a50" />} />
        <AreaHead text="Values" icon={<span className="font-['Liberation_Serif',serif] font-bold text-[14px] text-[#111] leading-[13px]">Σ</span>} />
      </div>
      <div className="flex pl-[7px] gap-[9px] mt-[1px] shrink-0">
        <div className="w-[144px] h-[81px] border border-[#7f9db9] bg-white px-[1px] pt-[2px]">
          {["ForSort", "Color", "Name", "Addition"].map((f) => <PillField key={f} name={f} />)}
        </div>
        <div className="w-[144px] h-[81px] border border-[#7f9db9] bg-white" />
      </div>
      <div className="flex items-center pl-[7px] pr-[7px] mt-[5px] h-[20px] shrink-0">
        <div className="w-[13px] h-[13px] border border-[#1f4f7f] bg-gradient-to-br from-[#d5dde8] to-[#fafbfd]" />
        <span className="ml-[6px] pt-[2px]">Defer Layout Update</span>
        <div className="ml-auto w-[73px] h-[20px] rounded-[2px] border border-[#c9cdc6] bg-[#ecf0f2] text-center leading-[18px] text-[#a3a8ad]">Update</div>
      </div>
    </div>
  );
}

function VScroll() {
  return (
    <div className="w-[15px] h-[534px] bg-[#7b9bc6] border-l border-[#6b8ebf] flex flex-col items-center shrink-0">
      <div className="w-[13px] h-[4px] mt-[1px] bg-[#eef3fa] border border-[#6f8fb8]" />
      <svg width="9" height="5" viewBox="0 0 9 5" className="mt-[8px]"><polygon points="0,5 9,5 4.500,0" fill="#4a6488" /></svg>
      <div className="w-full h-[458px] mt-[6px] rounded-[2px] border border-[#5f7da6] bg-gradient-to-r from-[#eef2f7] via-[#c9d2dd] to-[#dfe4eb] flex flex-col items-center justify-center gap-[1px]">
        <div className="w-[8px] h-px bg-[#6d7a8a]" /><div className="w-[8px] h-px bg-[#6d7a8a]" /><div className="w-[8px] h-px bg-[#6d7a8a]" /><div className="w-[8px] h-px bg-[#6d7a8a]" />
      </div>
      <svg width="9" height="5" viewBox="0 0 9 5" className="mt-[41px]"><polygon points="0,0 9,0 4.500,5" fill="#4a6488" /></svg>
    </div>
  );
}

function TabBar() {
  return (
    <div className="h-[17px] shrink-0 flex bg-[#7b9bc6] border-b border-[#3f618c] pl-[4px] pr-[4px]">
      <div className="w-[62px] h-full bg-gradient-to-b from-[#dbe7f6] to-[#b8cfeb] flex items-center justify-around px-[1px] border-t border-[#8aa8cf]">
        <svg width="7" height="8" viewBox="0 0 7 8"><path d="M.5 0v8" stroke="#27406f" /><polygon points="7,0 7,8 2,4" fill="#27406f" /></svg>
        <svg width="5" height="8" viewBox="0 0 5 8"><polygon points="5,0 5,8 0,4" fill="#27406f" /></svg>
        <svg width="5" height="8" viewBox="0 0 5 8"><polygon points="0,0 0,8 5,4" fill="#27406f" /></svg>
        <svg width="7" height="8" viewBox="0 0 7 8"><path d="M6.500 0v8" stroke="#27406f" /><polygon points="0,0 0,8 5,4" fill="#27406f" /></svg>
      </div>
      <div className="w-[63px] h-full ml-[1px] bg-gradient-to-b from-[#ffffff] to-[#cfdff3] text-[12.500px] font-bold text-[#15428b] leading-[15px] pl-[8px] [clip-path:polygon(0_0,100%_0,88%_100%,3%_100%)]">Sheet1</div>
      <div className="w-[42px] h-full -ml-[4px] bg-gradient-to-b from-[#cfdff3] to-[#a9c3e3] flex items-center justify-center [clip-path:polygon(28%_0,100%_0,78%_100%,0_100%)]">
        <svg width="14" height="14" viewBox="0 0 14 14"><rect x="3" y="4" width="10" height="8" rx="1" fill="#e6eef8" stroke="#6f8fb8" /><circle cx="4" cy="4" r="3" fill="#f5b63c" stroke="#c98a20" strokeWidth=".6" /></svg>
      </div>
      <div className="flex-1 flex items-center justify-end">
        <div className="w-[4px] h-[13px] bg-white border border-[#6f8fb8]" />
        <svg width="5" height="8" viewBox="0 0 5 8" className="ml-[8px] mr-[5px]"><polygon points="5,0 5,8 0,4" fill="#4a6488" /></svg>
        <div className="w-[166px] h-[15px] rounded-[2px] border border-[#6c8ab2] bg-gradient-to-b from-[#eef2f7] via-[#dfe4eb] to-[#b5bfca] flex items-center justify-center gap-[1px]">
          <div className="w-px h-[7px] bg-[#6d7a8a]" /><div className="w-px h-[7px] bg-[#6d7a8a]" /><div className="w-px h-[7px] bg-[#6d7a8a]" /><div className="w-px h-[7px] bg-[#6d7a8a]" />
        </div>
        <div className="w-[176px]" />
        <svg width="5" height="8" viewBox="0 0 5 8" className="mr-[6px]"><polygon points="0,0 0,8 5,4" fill="#4a6488" /></svg>
        <div className="w-[4px] h-[13px] bg-white border border-[#6f8fb8] mr-[18px]" />
      </div>
    </div>
  );
}

function StatusBar() {
  return (
    <div className="h-[21px] shrink-0 flex bg-gradient-to-b from-[#6d8fbc] to-[#84a3cc] border-b border-[#3f618c] rounded-b-[3px]">
      <div className="w-[712px] h-full flex items-center bg-gradient-to-b from-[#dfeafa] via-[#c4d8f3] to-[#d3e3f8] pl-[4px] text-[11px] text-[#15316b]">
        <div className="w-[47px] pl-[7px] h-full leading-[19px] border-r border-[#a9c0dc]">Ready</div>
        <div className="w-[34px] h-full flex items-center justify-center border-r border-[#a9c0dc]">
          <svg width="16" height="14" viewBox="0 0 16 14"><rect x="1" y="2" width="14" height="11" fill="#fff" stroke="#4f6f98" /><rect x="1" y="2" width="14" height="3" fill="#4f6f98" /><path d="M1 7.500h14M1 10h14M6 5v8M10 5v8" stroke="#8aa0bd" /><circle cx="3" cy="2.500" r="2.500" fill="#e0503a" /></svg>
        </div>
      </div>
      <div className="ml-[6px] h-[19px] mt-[1px] w-[55px] rounded-[2px] border border-[#b8cce4] bg-[#c7d8ef] flex overflow-hidden">
        <div className="w-[19px] bg-gradient-to-b from-[#fde3a7] to-[#fbb954] flex items-center justify-center border-r border-[#a9c0dc]"><svg width="13" height="11" viewBox="0 0 13 11"><rect x=".5" y=".5" width="12" height="10" fill="#fff" stroke="#6a5a3a" /><path d="M.5 4h12M.5 7h12M4.500 .5v10M8.500 .5v10" stroke="#6a5a3a" strokeWidth=".8" /></svg></div>
        <div className="w-[18px] flex items-center justify-center border-r border-[#a9c0dc]"><svg width="13" height="11" viewBox="0 0 13 11"><rect x=".5" y=".5" width="12" height="10" fill="#e8e8e8" stroke="#5a5a5a" /><rect x="4" y="2" width="5" height="7" fill="#fff" stroke="#5a5a5a" /></svg></div>
        <div className="flex-1 flex items-center justify-center"><svg width="13" height="11" viewBox="0 0 13 11"><rect x=".5" y=".5" width="12" height="10" fill="#e8e8e8" stroke="#5a5a5a" /><rect x="2" y="1" width="4" height="6" fill="#5a5a5a" /><rect x="7" y="1" width="4" height="6" fill="#5a5a5a" /></svg></div>
      </div>
      <span className="ml-[9px] w-[27px] text-[11px] leading-[20px] text-[#10245f]">100%</span>
      <div className="ml-[8px] flex items-center mt-[-1px]">
        <div className="w-[16px] h-[16px] rounded-full border border-[#5a6a80] bg-gradient-to-b from-[#f0f4f8] to-[#b4c0d0] flex items-center justify-center"><div className="w-[8px] h-[2px] bg-[#333]" /></div>
        <div className="w-[103px] h-[1px] bg-[#eef3fa] relative">
          <svg width="9" height="13" viewBox="0 0 9 13" className="absolute left-[46px] top-[-6px]"><path d="M.5.500h8v8l-4 4-4-4z" fill="#eef2f7" stroke="#5a6a80" /></svg>
        </div>
        <div className="w-[16px] h-[16px] rounded-full border border-[#5a6a80] bg-gradient-to-b from-[#f0f4f8] to-[#b4c0d0] flex items-center justify-center relative"><div className="w-[8px] h-[2px] bg-[#333]" /><div className="w-[2px] h-[8px] bg-[#333] absolute" /></div>
      </div>
      <svg width="11" height="11" viewBox="0 0 11 11" className="ml-[8px] mt-[7px]"><path d="M8 2h2v2H8zM5 5h2v2H5zM8 5h2v2H8zM2 8h2v2H2zM5 8h2v2H5zM8 8h2v2H8z" fill="#dfe8f3" /></svg>
    </div>
  );
}

export default function App() {
  return (
    <div className="w-[976px] h-[745px] overflow-hidden relative flex flex-col bg-[#bcd3ee] rounded-t-[6px] font-['Open_Sans','Liberation_Sans',sans-serif]">
      <TitleBar />
      <TabRow />
      <Ribbon />
      <FormulaBar />
      <div className="flex pl-[4px] h-[533px] shrink-0">
        <Sheet />
        <VScroll />
      </div>
      <TabBar />
      <StatusBar />
      <div className="absolute left-[5px] top-[8px]"><OfficeButton /></div>
      <div className="absolute inset-0 rounded-t-[6px] border border-[#3f618c] pointer-events-none" />
    </div>
  );
}
